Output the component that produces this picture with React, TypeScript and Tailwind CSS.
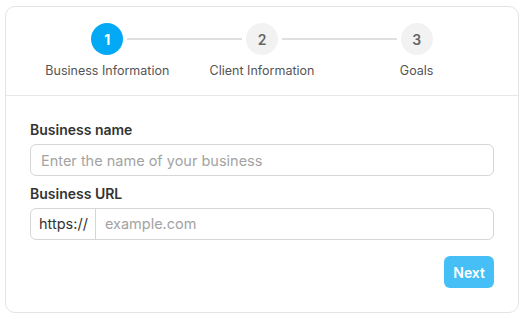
import React from "react";

const steps = [
  { n: 1, label: "Business Information", active: true },
  { n: 2, label: "Client Information", active: false },
  { n: 3, label: "Goals", active: false },
];

export default function App() {
  return (
    <div
      className="w-[524px] h-[319px] bg-white pl-[5px] pt-[6px] pr-[5px] pb-[6px]"
      style={{ fontFamily: "Inter, 'Noto Sans', sans-serif" }}
    >
      <div className="h-full border border-[#e4e4e4] rounded-[10px] bg-white flex flex-col">
        <div className="border-b border-[#e6e6e6] px-6 pt-4 pb-[14px]">
          <div className="grid grid-cols-3">
            {steps.map((s, i) => (
              <div key={s.n} className="flex flex-col items-center">
                <div className="flex items-center w-full">
                  <div className="flex-1 mr-1">
                    {i > 0 && <div className="h-[2px] bg-[#e0e0e0]" />}
                  </div>
                  <div
                    className={
                      s.active
                        ? "w-8 h-8 rounded-full bg-[#03a9f4] text-white flex items-center justify-center text-[14px] font-bold"
                        : "w-8 h-8 rounded-full bg-[#f2f2f2] text-[#666666] flex items-center justify-center text-[14px] font-semibold"
                    }
                  >
                    {s.n}
                  </div>
                  <div className="flex-1 ml-1">
                    {i < steps.length - 1 && <div className="h-[2px] bg-[#e0e0e0]" />}
                  </div>
                </div>
                <div className="mt-[6px] text-[12.5px] leading-5 text-[#555555]">{s.label}</div>
              </div>
            ))}
          </div>
        </div>
        <div className="px-6 pt-6 flex flex-col">
          <label className="text-[14px] leading-5 font-semibold text-[#333333] mb-1">Business name</label>
          <input
            className="h-8 w-full border border-[#d6d6d6] rounded-[6px] px-[10px] text-[14.5px] text-[#333333] placeholder:text-[#a3a3a3] outline-none"
            placeholder="Enter the name of your business"
          />
          <label className="mt-2 text-[14px] leading-5 font-semibold text-[#333333] mb-1">Business URL</label>
          <div className="h-8 w-full border border-[#d6d6d6] rounded-[6px] flex items-stretch">
            <span className="pl-2 pr-[7px] flex items-center text-[14.5px] text-[#333333] border-r border-[#d6d6d6]">https://</span>
            <input
              className="flex-1 px-[9px] text-[14.5px] text-[#333333] placeholder:text-[#a3a3a3] outline-none bg-transparent"
              placeholder="example.com"
            />
          </div>
          <div className="flex justify-end mt-4">
            <button className="h-8 px-[9px] rounded-[6px] bg-[#45bff6] text-white text-[14px] font-semibold">
              Next
            </button>
          </div>
        </div>
      </div>
    </div>
  );
}
